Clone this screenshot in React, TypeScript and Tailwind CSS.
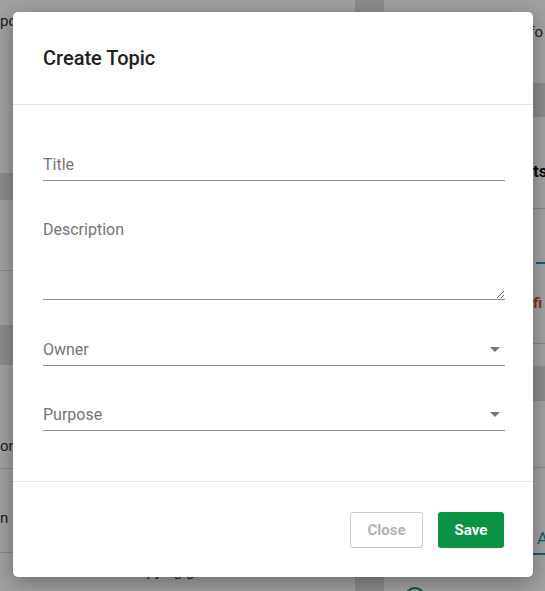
import React from 'react';

function Caret() {
  return (
    <svg width="10" height="5" viewBox="0 0 10 5" className="shrink-0">
      <path d="M0 0h10L5 5z" fill="#757575" />
    </svg>
  );
}

function SelectField({ label, className }: { label: string; className?: string }) {
  return (
    <div
      className={`flex h-8 items-center justify-between border-b border-[#949494] pr-[5px] text-[16px] text-[#757575] ${className ?? ''}`}
    >
      <span>{label}</span>
      <Caret />
    </div>
  );
}

function BackgroundPage() {
  return (
    <div className="flex h-full w-full text-[15px] text-[#333]">
      {/* left column */}
      <div className="flex w-[355px] flex-col overflow-hidden bg-white [&>*]:shrink-0">
        <div className="h-[173px] whitespace-nowrap pt-[10px]">poster settings overview</div>
        <div className="h-[27px] bg-[#dedede]" />
        <div className="h-[71px] border-b border-[#d6d6d6]" />
        <div className="h-[54px]" />
        <div className="h-[40px] bg-[#dedede]" />
        <div className="flex h-[104px] items-end border-b border-[#d6d6d6] pb-[11px] whitespace-nowrap">
          om topic owner
        </div>
        <div className="flex h-[84px] items-start border-b border-[#d6d6d6] pt-[38px]">n</div>
        <div className="pl-[130px] pt-[7px] whitespace-nowrap">copying guidelines</div>
      </div>
      {/* gutter */}
      <div className="w-[29px] bg-[#dcdcdc]" />
      {/* right column */}
      <div className="flex flex-1 flex-col overflow-hidden bg-white [&>*]:shrink-0">
        <div className="flex h-[83px] justify-end pr-[2px] pt-[21px] whitespace-nowrap">Info</div>
        <div className="h-[34px] bg-[#dedede]" />
        <div className="h-[92px] border-b border-[#d6d6d6] pl-[149px] pt-[42px] text-[17px] font-bold whitespace-nowrap text-[#111]">
          ts
        </div>
        <div className="flex h-[55px] items-end pl-[152px]">
          <div className="h-[2px] w-[20px] bg-[#2a8fb8]" />
        </div>
        <div className="h-[80px] border-b border-[#d6d6d6] pl-[145px] pt-[28px] font-bold whitespace-nowrap text-[#d5521e]">
          ifi
        </div>
        <div className="h-[22px]" />
        <div className="h-[35px] bg-[#dedede]" />
        <div className="h-[67px] border-b border-[#d6d6d6]" />
        <div className="h-[86px] pl-[153px] pt-[58px] text-[17px] whitespace-nowrap text-[#2a8fb8]">
          <div>A</div>
          <div className="mt-[1px] ml-[-4px] h-[2px] w-[20px] bg-[#2a8fb8]" />
        </div>
        <div className="pl-[21px] pt-[33px]">
          <div className="h-[20px] w-[20px] rounded-full border-2 border-[#0a9343]" />
        </div>
      </div>
    </div>
  );
}

export default function App() {
  return (
    <div className="relative h-[591px] w-[545px] overflow-hidden font-['Roboto','Liberation_Sans',sans-serif]">
      <BackgroundPage />

      {/* backdrop */}
      <div className="absolute inset-0 bg-black/[0.37]" />

      {/* modal */}
      <div className="absolute left-[13px] top-[12px] flex w-[520px] flex-col rounded-[5px] bg-white shadow-[0_5px_20px_rgba(0,0,0,0.35)]">
        {/* Header */}
        <div className="flex h-[93px] items-center border-b border-[#e5e5e5] px-[30px]">
          <h2 className="text-[20px] font-medium text-[#212121]">Create Topic</h2>
        </div>

        {/* Body */}
        <div className="flex flex-col pl-[30px] pr-[28px] pt-[44px] pb-[50px]">
          <input
            placeholder="Title"
            className="h-8 w-full border-b border-[#949494] bg-transparent text-[16px] text-[#212121] outline-none placeholder:text-[#757575]"
          />
          <textarea
            placeholder="Description"
            className="mt-[34px] block h-[85px] w-full resize-y border-b border-[#949494] bg-transparent pt-[5px] text-[16px] leading-5 text-[#212121] outline-none placeholder:text-[#757575]"
          />
          <SelectField label="Owner" className="mt-[34px]" />
          <SelectField label="Purpose" className="mt-[33px]" />
        </div>

        {/* Footer */}
        <div className="flex justify-end gap-[15px] border-t border-[#e5e5e5] pt-[30px] pr-[29px] pb-[29px]">
          <button className="h-9 w-[73px] rounded-[3px] border border-[#c8c8c8] bg-white text-[15px] font-bold text-[#b3b3b3]">
            Close
          </button>
          <button className="h-9 w-[66px] rounded-[3px] bg-[#0a9343] text-[15px] font-bold text-white">
            Save
          </button>
        </div>
      </div>
    </div>
  );
}
